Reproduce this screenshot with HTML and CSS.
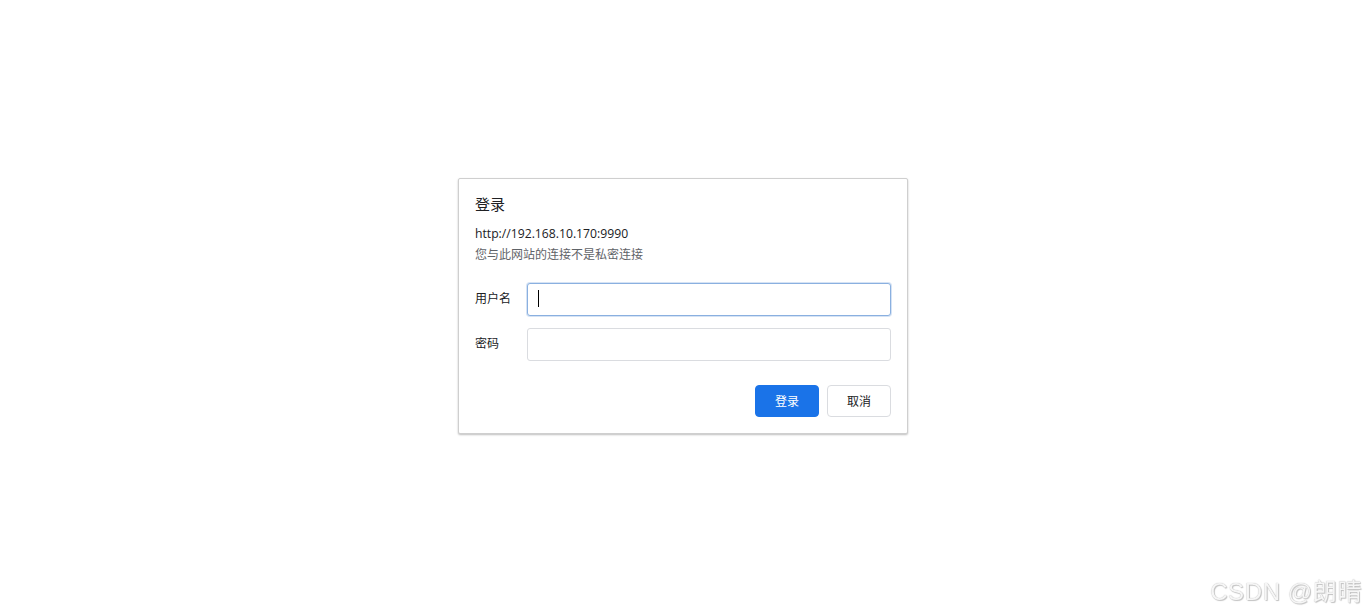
FILE: index.html
```html
<!DOCTYPE html>
<html lang="zh-CN">
<head>
    <meta charset="UTF-8">
    <meta name="viewport" content="width=device-width, initial-scale=1.0">
    <title>登录</title>
    <link rel="stylesheet" href="styles.css">
</head>
<body>
    <div class="dialog">
        <h2 class="title">登录</h2>
        <div class="origin">http://192.168.10.170:9990</div>
        <div class="warning">您与此网站的连接不是私密连接</div>

        <div class="form">
            <label class="row">
                <span class="label">用户名</span>
                <span class="field">
                    <input type="text" class="input focused">
                    <span class="caret"></span>
                </span>
            </label>
            <label class="row">
                <span class="label">密码</span>
                <span class="field">
                    <input type="password" class="input">
                </span>
            </label>
        </div>

        <div class="actions">
            <button class="btn primary">登录</button>
            <button class="btn">取消</button>
        </div>
    </div>

    <div class="watermark">CSDN @朗晴</div>
</body>
</html>
```

FILE: styles.css
```css
html, body {
    margin: 0;
    height: 100%;
}
body {
    font-family: "Open Sans", "Noto Sans CJK SC", sans-serif;
    background: #fff;
    display: flex;
    align-items: center;
    justify-content: center;
    color: #202124;
}
.dialog {
    width: 416px;
    padding: 16px;
    border: 1px solid #cfcfcf;
    border-radius: 2px;
    box-shadow: 0 1px 2px rgba(0,0,0,0.25);
    background: #fff;
    margin-top: -2px;
}
.title {
    margin: -2px 0 0;
    font-size: 15px;
    font-weight: normal;
    line-height: 22px;
    color: #202124;
}
.origin {
    margin-top: 10px;
    font-size: 12.2px;
    line-height: 18px;
    color: #202124;
}
.warning {
    margin-top: 3px;
    font-size: 12px;
    line-height: 18px;
    color: #5f6368;
}
.form {
    margin-top: 19px;
    display: flex;
    flex-direction: column;
    gap: 12px;
}
.row {
    display: flex;
    align-items: center;
}
.label {
    width: 52px;
    font-size: 12px;
    color: #202124;
    margin-top: -3px;
}
.field {
    position: relative;
    flex: 1;
    display: flex;
}
.input {
    flex: 1;
    height: 33px;
    box-sizing: border-box;
    border: 1px solid #dadce0;
    border-radius: 3px;
    padding: 0 10px;
    font-size: 13px;
    outline: none;
    caret-color: transparent;
}
.input.focused {
    border-color: #8ab0e0;
    box-shadow: 0 0 0 1px rgba(138, 176, 224, 0.35);
}
.caret {
    position: absolute;
    left: 11px;
    top: 7px;
    width: 1px;
    height: 17px;
    background: #000;
}
.actions {
    margin-top: 24px;
    display: flex;
    justify-content: flex-end;
    gap: 8px;
}
.btn {
    width: 64px;
    height: 32px;
    border: 1px solid #dadce0;
    border-radius: 4px;
    background: #fff;
    color: #202124;
    font-family: "Noto Sans CJK SC", sans-serif;
    font-size: 12px;
    cursor: pointer;
    padding: 0;
}
.btn.primary {
    background: #1a73e8;
    border-color: #1a73e8;
    color: #fff;
}
.watermark {
    position: fixed;
    right: 4px;
    bottom: 6px;
    font-family: "Liberation Sans", "Noto Sans CJK SC", sans-serif;
    font-size: 24px;
    color: #f6f6f6;
    text-shadow: 0 0 1px #aaa, 1px 1px 1px #c4c4c4;
    letter-spacing: 0.6px;
}
```
